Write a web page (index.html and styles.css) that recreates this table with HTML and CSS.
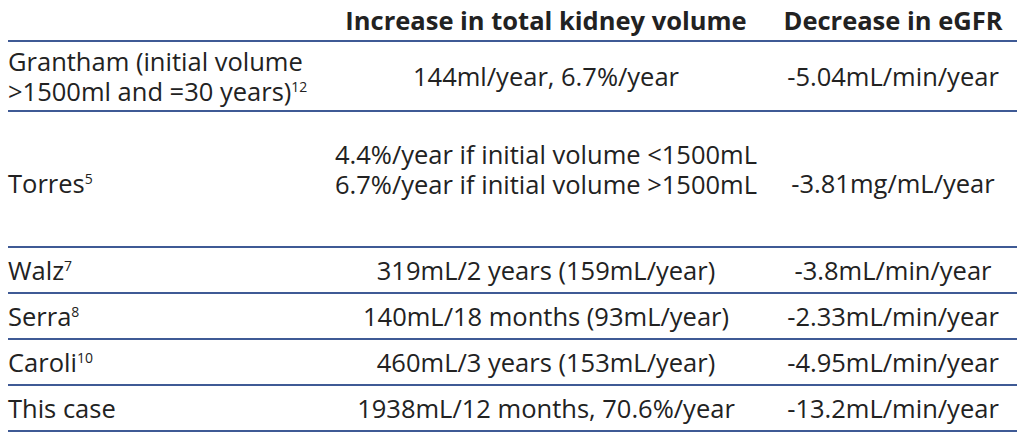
FILE: index.html
```html
<!DOCTYPE html>
<html>
<head>
<meta charset="utf-8">
<link rel="stylesheet" href="styles.css">
</head>
<body>
<table class="data">
  <colgroup>
    <col class="c1"><col class="c2"><col class="c3">
  </colgroup>
  <thead>
    <tr class="head">
      <th class="first"></th>
      <th>Increase in total kidney volume</th>
      <th>Decrease in eGFR</th>
    </tr>
  </thead>
  <tbody>
    <tr class="r-grantham">
      <td class="first">Grantham (initial volume &gt;1500ml and =30 years)<sup>12</sup></td>
      <td>144ml/year, 6.7%/year</td>
      <td>-5.04mL/min/year</td>
    </tr>
    <tr class="r-torres">
      <td class="first low">Torres<sup>5</sup></td>
      <td class="high">4.4%/year if initial volume &lt;1500mL<br>6.7%/year if initial volume &gt;1500mL</td>
      <td class="low">-3.81mg/mL/year</td>
    </tr>
    <tr class="r-single">
      <td class="first">Walz<sup>7</sup></td>
      <td>319mL/2 years (159mL/year)</td>
      <td>-3.8mL/min/year</td>
    </tr>
    <tr class="r-single">
      <td class="first">Serra<sup>8</sup></td>
      <td>140mL/18 months (93mL/year)</td>
      <td>-2.33mL/min/year</td>
    </tr>
    <tr class="r-single">
      <td class="first">Caroli<sup>10</sup></td>
      <td>460mL/3 years (153mL/year)</td>
      <td>-4.95mL/min/year</td>
    </tr>
    <tr class="r-single">
      <td class="first">This case</td>
      <td>1938mL/12 months, 70.6%/year</td>
      <td>-13.2mL/min/year</td>
    </tr>
  </tbody>
</table>
</body>
</html>
```
FILE: styles.css
```css
html, body {
  margin: 0;
  padding: 0;
  background: #ffffff;
}
body {
  padding-left: 8px;
  font-family: "Open Sans", "Noto Sans", sans-serif;
  color: #222222;
}
.data {
  border-collapse: collapse;
  width: 1009px;
  table-layout: fixed;
  font-size: 25.5px;
  line-height: 30px;
}
.c1 { width: 315px; }
.c2 { width: 446px; }
.c3 { width: 248px; }
.data th, .data td {
  padding: 0;
  text-align: center;
  vertical-align: middle;
  white-space: nowrap;
}
.data td.first {
  white-space: normal;
}
.data th {
  font-weight: 700;
  height: 41px;
  vertical-align: top;
  padding-top: 5px;
  box-sizing: border-box;
}
.data tr {
  border-bottom: 2px solid #3f5a95;
}
.data .first {
  text-align: left;
}
.data sup {
  font-size: 14px;
  line-height: 0;
  vertical-align: 9px;
}
.r-grantham td { height: 68px; }
.r-torres td {
  height: 136px;
  box-sizing: border-box;
  vertical-align: top;
}
.r-torres td.high { padding-top: 27px; }
.r-torres td.low { padding-top: 56px; }
.r-single td { height: 44px; }
```
